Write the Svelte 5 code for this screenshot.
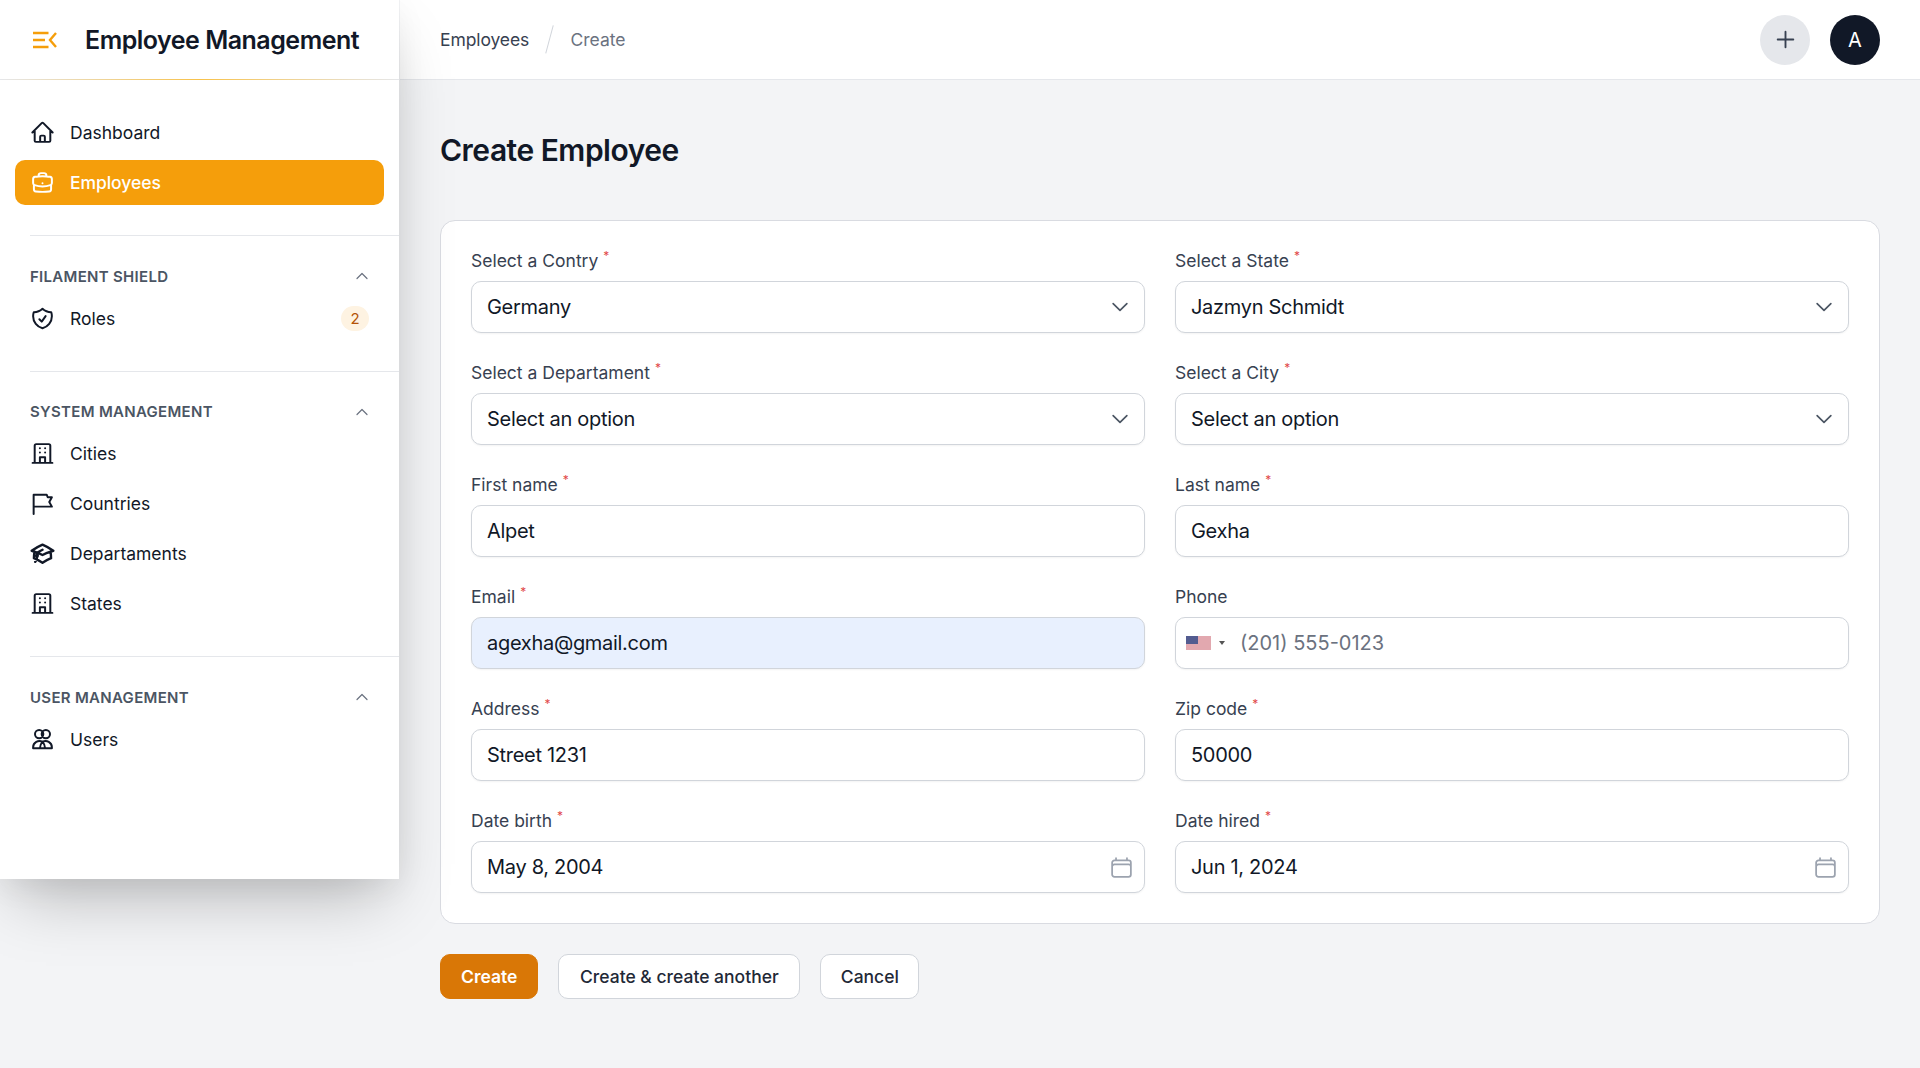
<script>
  const icons = {
    home: 'm2.25 12 8.954-8.955c.44-.439 1.152-.439 1.591 0L21.75 12M4.5 9.75v10.125c0 .621.504 1.125 1.125 1.125H9.75v-4.875c0-.621.504-1.125 1.125-1.125h2.25c.621 0 1.125.504 1.125 1.125V21h4.125c.621 0 1.125-.504 1.125-1.125V9.75M8.25 21h8.25',
    brief: 'M20.25 14.15v4.25c0 1.094-.787 2.036-1.872 2.18-2.087.277-4.216.42-6.378.42s-4.291-.143-6.378-.42c-1.085-.144-1.872-1.086-1.872-2.18v-4.25m16.5 0a2.18 2.18 0 0 0 .75-1.661V8.706c0-1.081-.768-2.015-1.837-2.175a48.114 48.114 0 0 0-3.413-.387m4.5 8.006c-.194.165-.42.295-.673.38A23.978 23.978 0 0 1 12 15.75c-2.648 0-5.195-.429-7.577-1.22a2.016 2.016 0 0 1-.673-.38m0 0A2.18 2.18 0 0 1 3 12.489V8.706c0-1.081.768-2.015 1.837-2.175a48.111 48.111 0 0 1 3.413-.387m7.5 0V5.25A2.25 2.25 0 0 0 13.5 3h-3a2.25 2.25 0 0 0-2.25 2.25v.894m7.5 0a48.667 48.667 0 0 0-7.5 0M12 12.75h.008v.008H12v-.008Z',
    shield: 'M9 12.75 11.25 15 15 9.75m-3-7.036A11.959 11.959 0 0 1 3.598 6 11.99 11.99 0 0 0 3 9.749c0 5.592 3.824 10.29 9 11.623 5.176-1.332 9-6.03 9-11.622 0-1.31-.21-2.571-.598-3.751h-.152c-3.196 0-6.1-1.248-8.25-3.285Z',
    office: 'M2.5 21h19M4.5 21V4.5A1.5 1.5 0 0 1 6 3h12a1.5 1.5 0 0 1 1.5 1.5V21M9.5 7h.01M14.5 7h.01M9.5 11h.01M14.5 11h.01M9.5 21v-5.5h5V21',
    flag: 'M3.5 22V3.5h12.5l1 2.5H21l-2.5 4.5L21 15H3.5',
    cap: 'M4.26 10.147a60.438 60.438 0 0 0-.491 6.347A48.62 48.62 0 0 1 12 20.904a48.62 48.62 0 0 1 8.232-4.41 60.46 60.46 0 0 0-.491-6.347m-15.482 0a50.636 50.636 0 0 0-2.658-.813A59.906 59.906 0 0 1 12 3.493a59.903 59.903 0 0 1 10.399 5.84c-.896.248-1.783.52-2.658.814m-15.482 0A50.717 50.717 0 0 1 12 13.489a50.702 50.702 0 0 1 7.74-3.342M6.75 15a.75.75 0 1 0 0-1.5.75.75 0 0 0 0 1.5Zm0 0v-3.675A55.378 55.378 0 0 1 12 8.443m-7.007 11.55A5.981 5.981 0 0 0 6.75 15.75v-1.5',
    users: 'M8.8 10.8a4 4 0 1 0 0-8 4 4 0 0 0 0 8Zm6.4 0a4 4 0 1 0 0-8 4 4 0 0 0 0 8ZM3 20.5v-1a6 6 0 0 1 9-5.2 6 6 0 0 1 9 5.2v1H3Zm9-6.2c-1.5 1.5-2.5 3.6-2.5 6.2m2.5-6.2c1.5 1.5 2.5 3.6 2.5 6.2',
    cal: 'M6.75 3v2.25M17.25 3v2.25M3 18.75V7.5a2.25 2.25 0 0 1 2.25-2.25h13.5A2.25 2.25 0 0 1 21 7.5v11.25m-18 0A2.25 2.25 0 0 0 5.25 21h13.5A2.25 2.25 0 0 0 21 18.75m-18 0v-7.5A2.25 2.25 0 0 1 5.25 9h13.5A2.25 2.25 0 0 1 21 11.25v7.5'
  };
  const groups = [
    { title: 'FILAMENT SHIELD', items: [{ t: 'Roles', i: 'shield', badge: '2' }] },
    { title: 'SYSTEM MANAGEMENT', items: [{ t: 'Cities', i: 'office' }, { t: 'Countries', i: 'flag' }, { t: 'Departaments', i: 'cap' }, { t: 'States', i: 'office' }] },
    { title: 'USER MANAGEMENT', items: [{ t: 'Users', i: 'users' }] }
  ];
  const fields = [
    { l: 'Select a Contry', v: 'Germany', k: 'select', r: 1 },
    { l: 'Select a State', v: 'Jazmyn Schmidt', k: 'select', r: 1 },
    { l: 'Select a Departament', v: 'Select an option', k: 'select', r: 1 },
    { l: 'Select a City', v: 'Select an option', k: 'select', r: 1 },
    { l: 'First name', v: 'Alpet', r: 1 },
    { l: 'Last name', v: 'Gexha', r: 1 },
    { l: 'Email', v: 'agexha@gmail.com', r: 1, k: 'auto' },
    { l: 'Phone', v: '(201) 555-0123', k: 'phone' },
    { l: 'Address', v: 'Street 1231', r: 1 },
    { l: 'Zip code', v: '50000', r: 1 },
    { l: 'Date birth', v: 'May 8, 2004', k: 'date', r: 1 },
    { l: 'Date hired', v: 'Jun 1, 2024', k: 'date', r: 1 }
  ];
</script>

<div class="page">
  <aside class="side">
    <div class="brand">
      <svg class="logo" viewBox="0 0 24 18" fill="none" stroke="#f59e0b" stroke-width="2.4"><path d="M0 2h15.5M0 9h12M0 16h15.5M23 2l-6 7 6 7"/></svg>
      <span class="bname">Employee Management</span>
    </div>
    <nav class="nav">
      <div class="top">
        <a class="item"><svg class="ic" viewBox="0 0 24 24" fill="none" stroke="currentColor" stroke-width="1.9" stroke-linecap="round" stroke-linejoin="round"><path d={icons.home}/></svg><span>Dashboard</span></a>
        <a class="item active"><svg class="ic" viewBox="0 0 24 24" fill="none" stroke="currentColor" stroke-width="1.9" stroke-linecap="round" stroke-linejoin="round"><path d={icons.brief}/></svg><span>Employees</span></a>
      </div>
      {#each groups as g}
        <hr class="div" />
        <div class="group">
          <div class="gh">
            <span>{g.title}</span>
            <svg class="gc" viewBox="0 0 24 24" fill="none" stroke="currentColor" stroke-width="1.8" stroke-linecap="round" stroke-linejoin="round"><path d="m4.5 15.75 7.5-7.5 7.5 7.5"/></svg>
          </div>
          {#each g.items as it}
            <a class="item"><svg class="ic" viewBox="0 0 24 24" fill="none" stroke="currentColor" stroke-width={it.i === 'cap' ? 2.3 : 1.9} stroke-linecap="round" stroke-linejoin="round"><path d={icons[it.i]}/></svg><span>{it.t}</span>{#if it.badge}<b class="badge">{it.badge}</b>{/if}</a>
          {/each}
        </div>
      {/each}
    </nav>
  </aside>

  <div class="main">
    <header class="top-bar">
      <div class="crumbs"><span class="c1">Employees</span><i class="slash"></i><span class="c2">Create</span></div>
      <div class="acts">
        <button class="plus" aria-label="Add"><svg viewBox="0 0 24 24" fill="none" stroke="currentColor" stroke-width="1.8" stroke-linecap="round"><path d="M12 4.5v15m7.5-7.5h-15"/></svg></button>
        <div class="avatar">A</div>
      </div>
    </header>
    <main class="content">
      <h1>Create Employee</h1>
      <section class="card">
        {#each fields as f}
          <div class="field">
            <div class="label">{f.l}{#if f.r}<sup>*</sup>{/if}</div>
            <div class="input" class:auto={f.k === 'auto'}>
              {#if f.k === 'phone'}
                <svg class="usa" viewBox="0 0 25 14">
                  <rect width="25" height="14" fill="#f0dfe0"/>
                  <path d="M0 1h25M0 3h25M0 5h25M0 7h25M0 9h25M0 11h25M0 13h25" stroke="#d4737f" stroke-width="1.1"/>
                  <rect width="12" height="8" fill="#535c90"/>
                </svg>
                <span class="caret"></span>
                <span class="ph">{f.v}</span>
              {:else}
                <span class="val">{f.v}</span>
              {/if}
              {#if f.k === 'select'}
                <svg class="chev" viewBox="0 0 24 24" fill="none" stroke="currentColor" stroke-width="1.8" stroke-linecap="round" stroke-linejoin="round"><path d="m19.5 8.25-7.5 7.5-7.5-7.5"/></svg>
              {/if}
              {#if f.k === 'date'}
                <svg class="calic" viewBox="0 0 24 24" fill="none" stroke="currentColor" stroke-width="1.7" stroke-linecap="round" stroke-linejoin="round"><path d={icons.cal}/></svg>
              {/if}
            </div>
          </div>
        {/each}
      </section>
      <div class="btns">
        <button class="btn prim">Create</button>
        <button class="btn wide">Create &amp; create another</button>
        <button class="btn last">Cancel</button>
      </div>
    </main>
  </div>
</div>

<style>
  :global(body) { margin: 0; background: #f3f4f6; font-family: "Inter", "Liberation Sans", sans-serif; color: #111827; }
  .page { display: grid; grid-template-columns: 400px 1fr; height: 1068px; overflow: hidden; }
  .side { width: 399px; height: 879px; background: #fff; box-shadow: 0 31px 62px -15px rgba(0,0,0,.25), 0 8px 30px rgba(0,0,0,.05); position: relative; z-index: 2; }
  .brand { height: 80px; box-sizing: border-box; display: flex; align-items: center; padding-left: 33px; gap: 28px; border-bottom: 1px solid #e5e7eb; border-image: linear-gradient(90deg, #e5e7eb 0%, #f8c24a 50%, #e5e7eb 100%) 1; }
  .logo { width: 24px; height: 18px; flex: none; }
  .bname { font-size: 25px; font-weight: 600; color: #111827; letter-spacing: -0.5px; white-space: nowrap; }
  .nav { padding-top: 30px; }
  .top { padding: 0 15px 30px; display: flex; flex-direction: column; gap: 5px; }
  .item { height: 45px; display: flex; align-items: center; gap: 15px; padding: 0 15px; border-radius: 10px; font-size: 17.5px; color: #111827; box-sizing: border-box; }
  .item.active { background: #f59e0b; color: #fff; font-weight: 500; letter-spacing: -.05px; }
  .item span { flex: 1; }
  .ic { width: 25px; height: 25px; flex: none; }
  .div { margin: 0 0 0 30px; border: 0; border-top: 1.25px solid #e5e7eb; }
  .group { padding: 29px 15px 30px; display: flex; flex-direction: column; gap: 5px; }
  .gh { height: 22px; display: flex; align-items: center; justify-content: space-between; padding: 0 15px; font-size: 15px; font-weight: 600; color: #4b5563; letter-spacing: .3px; margin-bottom: 3.5px; }
  .gc { width: 16px; height: 16px; color: #6b7280; margin-right: -.5px; }
  .badge { font-weight: 400; font-size: 15px; color: #b45309; background: #fef3e2; border-radius: 13px; width: 28px; height: 25px; display: flex; align-items: center; justify-content: center; }
  .main { min-width: 0; }
  .top-bar { height: 80px; box-sizing: border-box; background: #fff; border-bottom: 1.25px solid #e5e7eb; display: flex; align-items: center; justify-content: space-between; padding: 0 40px; }
  .crumbs { display: flex; align-items: center; font-size: 17.5px; }
  .c1 { color: #374151; letter-spacing: -.1px; }
  .c2 { color: #6b7280; }
  .slash { width: 1.25px; height: 29px; background: #d1d5db; transform: rotate(15deg); margin: 0 20px 0 20px; }
  .acts { display: flex; gap: 20px; }
  .plus { width: 50px; height: 50px; border-radius: 50%; border: 0; background: #e5e7eb; color: #374151; padding: 12.5px; display: flex; }
  .plus svg { width: 25px; height: 25px; }
  .avatar { width: 50px; height: 50px; border-radius: 50%; background: #111827; color: #fff; font-size: 20px; display: flex; align-items: center; justify-content: center; }
  .content { padding: 40px; }
  h1 { margin: 5px 0 0; font-size: 30px; font-weight: 600; line-height: 50px; letter-spacing: -0.5px; color: #111827; }
  .card { margin-top: 45px; box-sizing: border-box; height: 704px; background: #fff; border: 1.25px solid #d9dbe1; border-radius: 15px; padding: 30px; display: grid; grid-template-columns: 1fr 1fr; column-gap: 30px; row-gap: 30px; align-content: start; }
  .field { min-width: 0; height: 82px; display: flex; flex-direction: column; justify-content: space-between; }
  .label { font-size: 17.5px; line-height: 20px; color: #374151; }
  sup { color: #dc2626; font-size: 12px; line-height: 0; margin-left: 5px; opacity: .85; }
  .input { height: 52px; box-sizing: border-box; border: 1.25px solid #d1d5db; border-radius: 10px; padding: 0 15px; display: flex; align-items: center; font-size: 20px; color: #111827; box-shadow: 0 1px 2px rgba(0,0,0,.05); background: #fff; }
  .input.auto { background: #e8f0fe; }
  .val { flex: 1; letter-spacing: -.3px; }
  .ph { color: #6b7280; margin-left: 15px; }
  .chev { width: 22px; height: 22px; color: #4b5563; margin-right: -1.5px; flex: none; }
  .calic { width: 25px; height: 25px; color: #9ca3af; margin-right: -5px; flex: none; }
  .usa { width: 25px; height: 14px; margin-left: -5px; }
  .caret { margin-left: 8px; border: 3.5px solid transparent; border-top: 4px solid #555; border-bottom: 0; }
  .btns { margin-top: 30px; display: flex; gap: 20px; }
  .btn { height: 45px; padding: 0 20px; font: 500 17.5px "Inter", sans-serif; background: #fff; color: #1f2937; border: 1.25px solid #d1d5db; border-radius: 10px; }
  .btn.wide { padding: 0 20.6px; }
  .btn.last { padding: 0 19.5px; }
  .btn.prim { background: #d97706; color: #fff; border-color: #d97706; font-weight: 600; }
</style>
